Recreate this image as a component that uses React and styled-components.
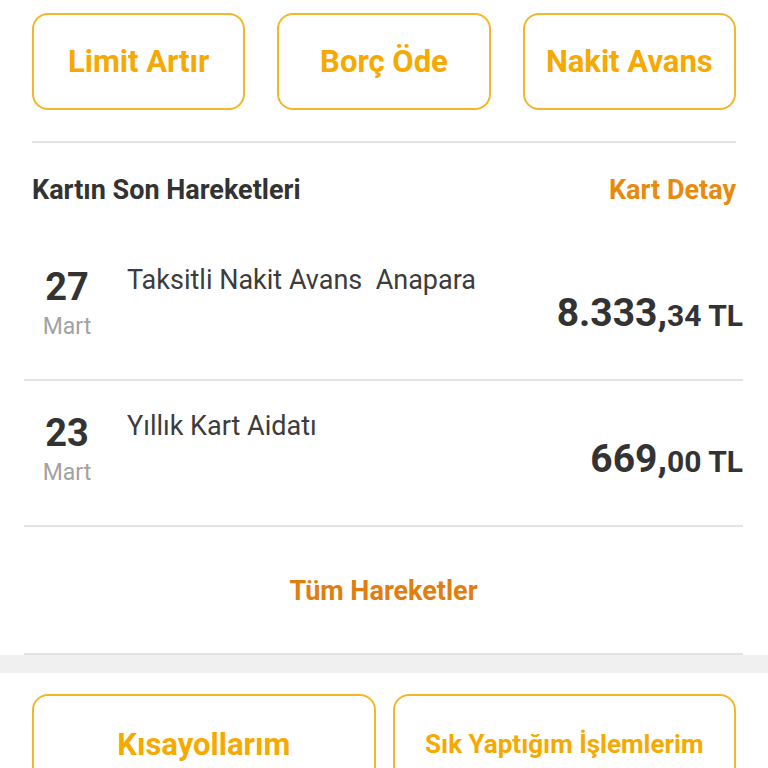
import React from "react";
import styled, { createGlobalStyle } from "styled-components";

const GlobalStyle = createGlobalStyle`
  body {
    margin: 0;
    background: #ffffff;
    font-family: Roboto, "Noto Sans", Arial, sans-serif;
  }
`;

const transactions = [
  { day: "27", month: "Mart", title: "Taksitli Nakit Avans  Anapara", whole: "8.333,", cents: "34" },
  { day: "23", month: "Mart", title: "Yıllık Kart Aidatı", whole: "669,", cents: "00" },
];

export default function App() {
  return (
    <Page>
      <GlobalStyle />
      <TopActions>
        <ActionButton>Limit Artır</ActionButton>
        <ActionButton>Borç Öde</ActionButton>
        <ActionButton>Nakit Avans</ActionButton>
      </TopActions>
      <Divider />

      <SectionHeader>
        <SectionTitle>Kartın Son Hareketleri</SectionTitle>
        <HeaderLink>Kart Detay</HeaderLink>
      </SectionHeader>

      <List>
        {transactions.map((t) => (
          <Row key={t.day}>
            <DateCol>
              <Day>{t.day}</Day>
              <Month>{t.month}</Month>
            </DateCol>
            <Title>{t.title}</Title>
            <Amount>
              <Whole>{t.whole}</Whole>
              <Small>{t.cents} TL</Small>
            </Amount>
          </Row>
        ))}
        <AllLink>Tüm Hareketler</AllLink>
      </List>

      <Band />

      <BottomActions>
        <ActionButton $tall>Kısayollarım</ActionButton>
        <ActionButton $tall $small>Sık Yaptığım İşlemlerim</ActionButton>
      </BottomActions>
    </Page>
  );
}

const Page = styled.div`
  width: 768px;
  height: 768px;
  overflow: hidden;
  background: #fff;
`;

const TopActions = styled.div`
  display: grid;
  grid-template-columns: repeat(3, 1fr);
  gap: 32px;
  padding: 13px 32px 0;
`;

const ActionButton = styled.div`
  height: ${(p) => (p.$tall ? "100px" : "97px")};
  box-sizing: border-box;
  border: 2px solid #f4b62a;
  border-radius: 16px;
  display: flex;
  align-items: center;
  justify-content: center;
  color: #f6a900;
  font-weight: 700;
  font-size: ${(p) => (p.$small ? "26px" : "31px")};
`;

const Divider = styled.div`
  height: 2px;
  margin: 31px 32px 0;
  background: #e4e4e4;
`;

const SectionHeader = styled.div`
  display: flex;
  justify-content: space-between;
  align-items: center;
  padding: 0 32px;
  margin-top: 32px;
  height: 30px;
`;

const SectionTitle = styled.div`
  font-size: 27px;
  font-weight: 700;
  color: #333;
`;

const HeaderLink = styled.div`
  font-size: 27px;
  font-weight: 700;
  color: #e88a0c;
`;

const List = styled.div`
  padding: 30px 25px 0 24px;
`;

const Row = styled.div`
  display: grid;
  grid-template-columns: 86px 1fr auto;
  align-items: start;
  height: 146px;
  box-sizing: border-box;
  padding-top: 30px;
  border-bottom: 2px solid #e4e4e4;
`;

const DateCol = styled.div`
  display: flex;
  flex-direction: column;
  align-items: center;
`;

const Day = styled.div`
  font-size: 38px;
  line-height: 44px;
  font-weight: 700;
  color: #333;
`;

const Month = styled.div`
  margin-top: 5px;
  font-size: 23px;
  line-height: 26px;
  color: #a2a2a2;
`;

const Title = styled.div`
  padding-left: 17px;
  font-size: 27px;
  line-height: 30px;
  color: #3c3c3c;
  white-space: pre;
`;

const Amount = styled.div`
  margin-top: 26px;
  line-height: 44px;
  color: #333;
  font-weight: 700;
`;

const Whole = styled.span`
  font-size: 39px;
`;

const Small = styled.span`
  font-size: 30px;
`;

const AllLink = styled.div`
  height: 128px;
  box-sizing: border-box;
  padding-top: 2px;
  display: flex;
  align-items: center;
  justify-content: center;
  font-size: 27px;
  font-weight: 700;
  color: #e07e10;
  border-bottom: 2px solid #e4e4e4;
`;

const Band = styled.div`
  height: 18px;
  background: #f0f0f0;
`;

const BottomActions = styled.div`
  display: grid;
  grid-template-columns: 1fr 1fr;
  gap: 17px;
  padding: 21px 32px 0;
`;
